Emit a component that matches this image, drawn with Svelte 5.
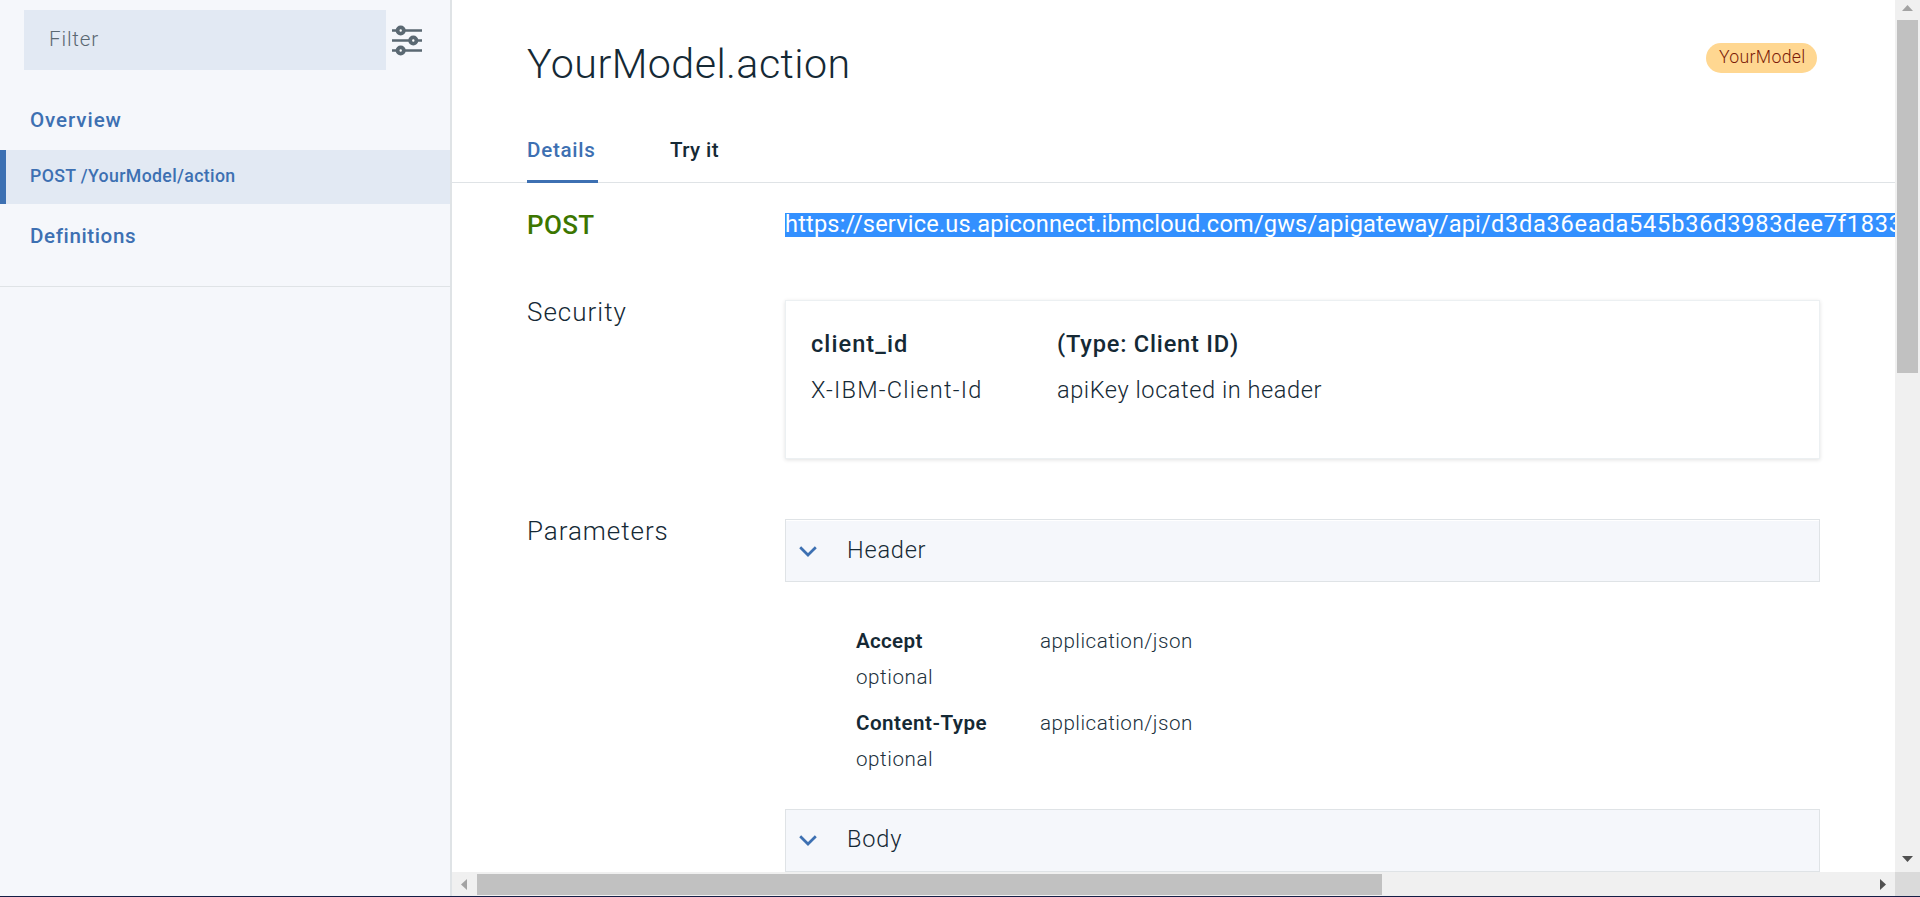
<script>
  const params = [
    { name: 'Accept', spacing: 0.3, value: 'application/json' },
    { name: 'Content-Type', spacing: 0.48, value: 'application/json' }
  ];
</script>

{#snippet chevron()}
  <svg class="chevron" width="18" height="12" viewBox="0 0 18 12" fill="none" stroke="#3d70b2" stroke-width="2.7">
    <path d="M1.2 1.2 9 9l7.8-7.8" />
  </svg>
{/snippet}

<div class="app">
  <aside>
    <div class="filter-row">
      <div class="filter">Filter</div>
      <svg width="30" height="32" viewBox="0 0 30 32" fill="none" stroke="#5a6872">
        <g stroke-width="2.6"><path d="M0 5.5h30M0 15.5h30M0 25.5h30" /></g>
        <g stroke-width="3.8" fill="#fff"><circle cx="8.7" cy="5.5" r="3.1" /><circle cx="21.3" cy="15.5" r="3.1" /><circle cx="8.7" cy="25.5" r="3.1" /></g>
      </svg>
    </div>
    <nav>
      <a class="overview">Overview</a>
      <a class="active">POST /YourModel/action</a>
      <a class="definitions">Definitions</a>
    </nav>
  </aside>

  <div class="viewport">
    <main>
      <header>
        <h1>YourModel.action</h1>
        <span class="tag">YourModel</span>
      </header>
      <div class="tabs">
        <span class="tab on">Details</span>
        <span class="tab try">Try it</span>
      </div>

      <section class="endpoint">
        <h2 class="method">POST</h2>
        <div class="url"><span>https://service.us.apiconnect.ibmcloud.com/gws/apigateway/api/<i>d3da36eada545b36d3983dee7f1833</i></span></div>
      </section>

      <section class="security">
        <h2 class="sec">Security</h2>
        <div class="card">
          <b class="cid">client_id</b><b class="type">(Type: Client ID)</b>
          <span class="xibm">X-IBM-Client-Id</span><span class="key">apiKey located in header</span>
        </div>
      </section>

      <section class="parameters">
        <h2>Parameters</h2>
        <div>
          <div class="panel first">{@render chevron()}<span>Header</span></div>
          <div class="list">
            {#each params as p}
              <div class="param">
                <b style="letter-spacing: {p.spacing}px">{p.name}</b><span class="json">{p.value}</span>
                <span class="opt">optional</span>
              </div>
            {/each}
          </div>
          <div class="panel">{@render chevron()}<span class="body">Body</span></div>
        </div>
      </section>
    </main>

    <div class="vbar">
      <svg width="11" height="6"><path d="M0 6 5.5 0 11 6z" fill="#a3a3a3" /></svg>
      <div class="vthumb"></div>
      <svg class="down" width="11" height="6"><path d="M0 0 5.5 6 11 0z" fill="#505050" /></svg>
    </div>
    <div class="hbar">
      <svg width="6" height="11"><path d="M6 0 0 5.5 6 11z" fill="#a3a3a3" /></svg>
      <div class="hthumb"></div>
      <svg class="right" width="6" height="11"><path d="M0 0 6 5.5 0 11z" fill="#505050" /></svg>
    </div>
    <div class="corner"></div>
  </div>
</div>

<style>
  :global(body) { margin: 0; background: #fff; overflow: hidden; }
  .app, .app * { box-sizing: border-box; }
  .app {
    display: grid; grid-template-columns: 452px 1fr; height: 897px;
    border-bottom: 1px solid #141e46; overflow: hidden;
    font-family: Roboto, "Open Sans", sans-serif; font-weight: 350; color: #152935; white-space: nowrap;
  }
  h1, h2 { margin: 0; font-weight: 300; }
  b { font-weight: 500; }

  aside { background: #f5f7fb; border-right: 2px solid #dfe3e6; }
  .filter-row { display: flex; gap: 6px; padding: 10px 0 0 24px; }
  .filter-row svg { margin-top: 15px; }
  .filter {
    width: 362px; height: 60px; padding-left: 25px; background: #e2e9f3;
    color: #5a6872; font-size: 20.6px; line-height: 59px; letter-spacing: .84px;
  }
  nav { height: 217px; padding-top: 20px; border-bottom: 1px solid #dfe3e6; color: #3d70b2; font-weight: 500; }
  nav a { display: block; padding-left: 30px; font-size: 20.6px; }
  .overview { height: 60px; line-height: 60px; letter-spacing: .9px; }
  nav .active {
    height: 54px; padding-left: 24px; border-left: 6px solid #3d70b2; background: #e2e9f3;
    font-size: 17.7px; line-height: 52px; letter-spacing: .36px;
  }
  .definitions { line-height: 64px; letter-spacing: .6px; }

  .viewport { display: grid; grid-template: 872px 24px / 1fr 25px; min-width: 0; }
  main { min-width: 0; overflow: hidden; }
  header { display: flex; justify-content: space-between; align-items: flex-start; height: 120px; padding: 32px 78px 0 75px; }
  h1 { font-size: 41.2px; line-height: 65px; letter-spacing: .44px; }
  .tag {
    width: 111px; height: 30px; margin-top: 11px; padding-left: 13px; border-radius: 15px;
    background: #ffd791; color: #7c1c08; font-size: 17.7px; line-height: 28px; letter-spacing: .3px;
  }
  .tabs { display: flex; gap: 72px; height: 63px; padding-left: 75px; border-bottom: 1px solid #dfe3e6; font-size: 20.6px; font-weight: 500; line-height: 60px; }
  .tab { height: 63px; letter-spacing: .4px; }
  .on { width: 71px; color: #3d70b2; border-bottom: 3px solid #3d70b2; letter-spacing: .7px; }

  section { display: grid; grid-template-columns: 258px 1fr; padding: 0 75px; }
  h2 { font-size: 26px; line-height: 32px; letter-spacing: .95px; }
  .sec { letter-spacing: 1px; }
  .endpoint { height: 117px; padding-right: 0; }
  .method { margin: 26px 0 0; color: #3c7600; font-weight: 500; letter-spacing: .35px; }
  .url { padding-top: 30px; overflow: hidden; }
  .url span { display: inline-block; height: 24px; background: #3390ff; color: #fff; font-size: 23.6px; font-weight: 400; line-height: 23px; letter-spacing: .17px; padding-right: 20px; }
  .url i { font-style: normal; letter-spacing: .75px; }
  .security { height: 219px; }
  .sec { margin-top: -4px; }
  .card {
    display: grid; grid-template: 46px 48px / 246px 1fr; height: 159px; padding: 20px 25px; line-height: 47px;
    border: 1px solid #ecf0f2; font-size: 23.6px; box-shadow: 0 1px 4px rgba(0, 0, 0, .12);
  }
  .cid { letter-spacing: 1.05px; }
  .type { letter-spacing: .8px; }
  .xibm { letter-spacing: 1.2px; }
  .key { letter-spacing: .55px; }
  .parameters h2 { margin-top: -4px; }
  .panel { display: flex; align-items: center; gap: 30px; height: 63px; padding-left: 13px; background: #f5f7fb; border: 1px solid #dfe3e6; font-size: 23.6px; letter-spacing: .75px; }
  .panel span { line-height: 61px; }
  .first { box-shadow: inset 0 1px #fff; }
  .first .chevron { margin-top: 2px; }
  .panel .body { line-height: 59px; padding-bottom: 2px; letter-spacing: .8px; }
  .list { height: 227px; padding: 41px 0 0 71px; }
  .param { display: grid; grid-template: 36px 36px / 184px 1fr; height: 82px; line-height: 36px; font-size: 20.6px; color: #20303c; }
  .param b { font-weight: 600; color: #152935; }
  .json { letter-spacing: .48px; }
  .opt { letter-spacing: .55px; }

  .vbar { display: flex; flex-direction: column; align-items: center; padding: 5px 0 10px; background: #f0f0f0; }
  .vthumb { width: 21px; height: 353px; margin-top: 9px; background: #c1c1c1; }
  .down { margin-top: auto; }
  .hbar { display: flex; align-items: center; padding: 0 9px; background: #f0f0f0; }
  .hthumb { width: 905px; height: 21px; margin-left: 10px; background: #c1c1c1; }
  .right { margin-left: auto; }
  .corner { background: #dadada; }
</style>
